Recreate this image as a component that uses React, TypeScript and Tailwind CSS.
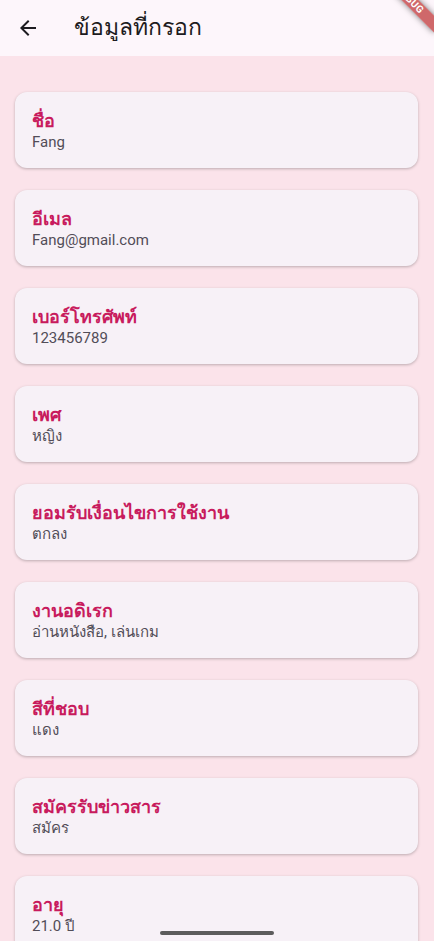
import React from 'react';

const items: { label: string; value: string }[] = [
  { label: 'ชื่อ', value: 'Fang' },
  { label: 'อีเมล', value: 'Fang@gmail.com' },
  { label: 'เบอร์โทรศัพท์', value: '123456789' },
  { label: 'เพศ', value: 'หญิง' },
  { label: 'ยอมรับเงื่อนไขการใช้งาน', value: 'ตกลง' },
  { label: 'งานอดิเรก', value: 'อ่านหนังสือ, เล่นเกม' },
  { label: 'สีที่ชอบ', value: 'แดง' },
  { label: 'สมัครรับข่าวสาร', value: 'สมัคร' },
  { label: 'อายุ', value: '21.0 ปี' },
];

const font = { fontFamily: 'Roboto, "Noto Sans", sans-serif' };

const InfoCard: React.FC<{ label: string; value: string }> = ({ label, value }) => (
  <div className="mx-[15px] mr-[16px] rounded-[12px] bg-[#f7f1f7] px-[17px] py-4 shadow-[0_1px_3px_rgba(0,0,0,0.25)]">
    <div className="text-[18px] leading-[25px] font-bold text-[#c81b5d]">{label}</div>
    <div className="text-[15px] leading-[19px] text-[#524d58]">{value}</div>
  </div>
);

export default function App() {
  return (
    <div className="relative h-[941px] w-full overflow-hidden bg-[#fbe3ea]" style={font}>
      <header className="flex h-14 items-center bg-[#fdf6fb]">
        <button className="ml-4 flex h-6 w-6 items-center justify-center text-[#1d1b20]">
          <svg width="24" height="24" viewBox="0 0 24 24" fill="currentColor">
            <path d="M20 11H7.83l5.59-5.59L12 4l-8 8 8 8 1.41-1.41L7.83 13H20v-2z" />
          </svg>
        </button>
        <h1 className="ml-[34px] text-[23px] leading-7 font-normal text-[#1d1b20]">ข้อมูลที่กรอก</h1>
      </header>

      <div className="flex flex-col gap-[22px] pt-9">
        {items.map((it) => (
          <InfoCard key={it.label} label={it.label} value={it.value} />
        ))}
      </div>

      {/* debug ribbon */}
      <div className="pointer-events-none absolute left-[370px] top-[-6px] flex h-3 w-20 rotate-45 items-center justify-center bg-[#b71c1c]/65 shadow-[0_0_6px_rgba(0,0,0,0.5)]">
        <span className="text-[10px] leading-3 font-bold tracking-[0.5px] text-white">DEBUG</span>
      </div>

      {/* home indicator */}
      <div className="absolute bottom-[6px] left-[160px] h-1 w-[114px] rounded-full bg-[#5c5c5c]" />
    </div>
  );
}
